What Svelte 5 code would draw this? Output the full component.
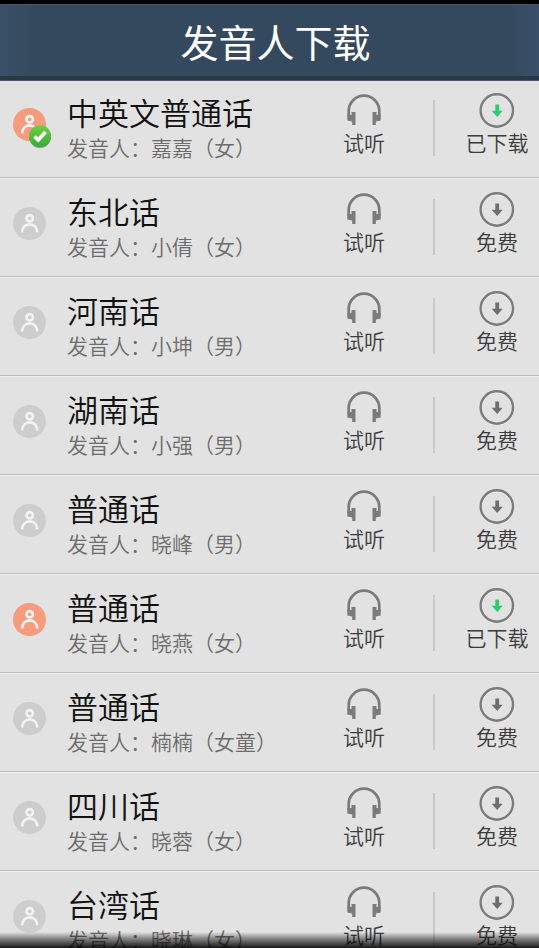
<script lang="ts">
	type Voice = { name: string; speaker: string; downloaded?: boolean; current?: boolean };

	const voices: Voice[] = [
		{ name: '中英文普通话', speaker: '嘉嘉（女）', downloaded: true, current: true },
		{ name: '东北话', speaker: '小倩（女）' },
		{ name: '河南话', speaker: '小坤（男）' },
		{ name: '湖南话', speaker: '小强（男）' },
		{ name: '普通话', speaker: '晓峰（男）' },
		{ name: '普通话', speaker: '晓燕（女）', downloaded: true },
		{ name: '普通话', speaker: '楠楠（女童）' },
		{ name: '四川话', speaker: '晓蓉（女）' },
		{ name: '台湾话', speaker: '晓琳（女）' }
	];
</script>

<div class="page">
	<header>
		<h1>发音人下载</h1>
	</header>

	<ul>
		{#each voices as voice}
			<li>
				<div class="avatar" class:active={voice.downloaded}>
					<svg class="person" viewBox="0 0 33 33" aria-hidden="true">
						<circle class="disc" cx="16.5" cy="16.5" r="16.5" />
						<circle class="line" cx="16.7" cy="11.3" r="3.2" />
						<path class="line" d="M9.2 25.6c0-5 3-8.2 7.5-8.2s7.5 3.2 7.5 8.2" />
					</svg>
					{#if voice.current}
						<svg class="check" viewBox="0 0 24 25" aria-hidden="true">
							<defs>
								<linearGradient id="check-fill" x1="0" y1="0" x2="0" y2="1">
									<stop offset="0" stop-color="#72cf45" />
									<stop offset="1" stop-color="#36ad35" />
								</linearGradient>
							</defs>
							<circle cx="12" cy="13" r="11" fill="#7d9a78" />
							<circle cx="12" cy="12" r="11" fill="url(#check-fill)" />
							<path d="M6.5 12.5l3.7 3.5 7.3-8" fill="none" stroke="#fff" stroke-width="3.6" />
						</svg>
					{/if}
				</div>

				<div class="info">
					<h2>{voice.name}</h2>
					<p>发音人：{voice.speaker}</p>
				</div>

				<button class="listen" type="button">
					<svg viewBox="0 0 36 36" aria-hidden="true">
						<path d="M2.7 25V19a15.3 15.3 0 0 1 30.6 0V25" fill="none" stroke="#7b7b7b" stroke-width="2.7" />
						<path d="M1.3 23h4.200v-3h4V33H6.200v-3.500l-4.900-1zM34.700 23h-4.200v-3h-4V33h3.300v-3.500l4.900-1z" fill="#7b7b7b" />
					</svg>
					<span>试听</span>
				</button>

				<button class="download" class:done={voice.downloaded} type="button">
					<svg viewBox="0 0 36 36" aria-hidden="true">
						<circle cx="17.8" cy="19.5" r="16.2" fill="none" stroke="#f0f0f0" stroke-width="2.4" />
						<circle cx="17.8" cy="18.5" r="16.2" fill="none" stroke="#7b7b7b" stroke-width="2.4" />
						<path class="arrow" d="M16.3 12.5h3.8v6.3h3.6L18.2 25l-5.5-6.2h3.6z" />
					</svg>
					<span>{voice.downloaded ? '已下载' : '免费'}</span>
				</button>
			</li>
		{/each}
	</ul>
</div>

<style>
	:global(body) {
		background: #e2e2e2;
	}

	.page {
		position: relative;
		height: 100vh;
		overflow: hidden;
		font-family: 'Noto Sans CJK SC', sans-serif;
		font-weight: 350;
		background: #e2e2e2;
	}

	.page::after {
		content: '';
		position: absolute;
		left: 0;
		right: 0;
		bottom: 0;
		height: 16px;
		background: linear-gradient(rgba(0, 0, 0, 0), rgba(0, 0, 0, 0.4) 40%, rgba(0, 0, 0, 0.9));
		pointer-events: none;
	}

	header {
		position: relative;
		box-sizing: border-box;
		display: flex;
		align-items: center;
		justify-content: center;
		height: 80px;
		padding-top: 2px;
		padding-left: 12px;
		border-top: 4px solid #000;
		border-bottom: 4px solid #293846;
		background: linear-gradient(90deg, #3a5068, #35495e 34px, #35495e calc(100% - 30px), #3a5068);
		box-shadow: 0 1px #4e566a, inset 0 1px #43586c;
	}

	h1 {
		margin: 0;
		font-size: 38px;
		font-weight: 400;
		line-height: 56px;
		color: #fff;
	}

	ul {
		margin: 0;
		padding: 0;
		list-style: none;
	}

	li {
		box-sizing: border-box;
		display: flex;
		height: 99px;
		border-bottom: 1px solid #f2f2f2;
		box-shadow: inset 0 -1px #bcbcbc;
	}

	.avatar {
		position: relative;
		flex: none;
		width: 54px;
		padding: 28px 0 0 13px;
		box-sizing: border-box;
	}

	.person {
		display: block;
		width: 33px;
		height: 33px;
	}

	.disc {
		fill: #cdcdcd;
	}

	.active .disc {
		fill: #f79b7d;
	}

	.line {
		fill: none;
		stroke: #f3f3f3;
		stroke-width: 2.6px;
	}

	.check {
		position: absolute;
		top: 44px;
		left: 28px;
		width: 24px;
		height: 25px;
	}

	.info {
		flex: 1;
		min-width: 0;
		padding: 12px 0 0 13px;
		white-space: nowrap;
	}

	h2 {
		margin: 0;
		font-size: 31px;
		font-weight: inherit;
		line-height: 40px;
		color: #111;
	}

	p {
		margin: 0;
		font-size: 21px;
		line-height: 30px;
		color: #6c6c6c;
	}

	button {
		display: flex;
		flex-direction: column;
		align-items: center;
		margin: 0;
		padding: 12px 0 0;
		border: 0;
		background: none;
		font-family: inherit;
		font-size: 21px;
		font-weight: inherit;
		line-height: 28px;
		color: #3c3c3c;
		white-space: nowrap;
	}

	button svg {
		width: 36px;
		height: 36px;
	}

	.listen {
		position: relative;
		width: 142px;
	}

	.listen::after {
		content: '';
		position: absolute;
		top: 20px;
		right: 0;
		width: 2px;
		height: 56px;
		background: #c9c9c9;
	}

	.download {
		width: 104px;
		padding-left: 20px;
	}

	.arrow {
		fill: #6e6e6e;
	}

	.done .arrow {
		fill: #2ecc71;
	}
</style>
